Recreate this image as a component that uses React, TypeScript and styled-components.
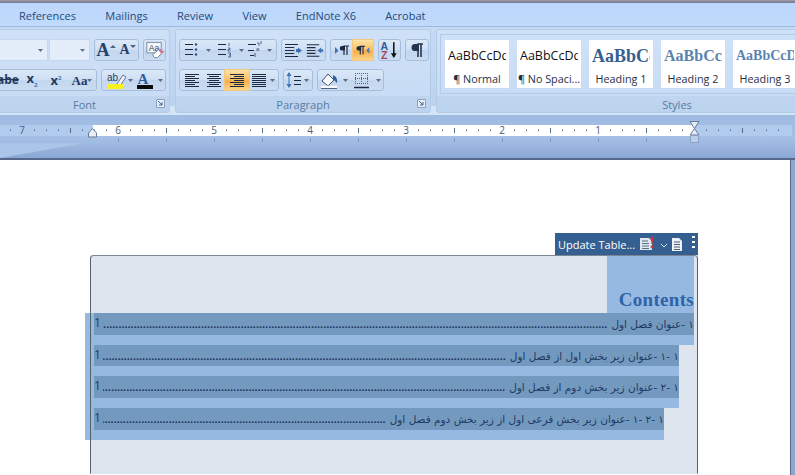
import React from 'react';
import styled, { createGlobalStyle, css } from 'styled-components';

const Global = createGlobalStyle`
  html, body { margin: 0; padding: 0; background: #fff; }
  body { font-family: "Open Sans", "Noto Sans", sans-serif; }
`;

const Page = styled.div`
  width: 795px; height: 475px; overflow: hidden;
  display: flex; flex-direction: column; background: #fff;
`;
const TitleEdge = styled.div`
  height: 3px; background: linear-gradient(#a89aa6, #6b7a98);
`;
const TabBar = styled.div`
  height: 24px; box-sizing: border-box; padding-left: 19px; display: flex; align-items: center; gap: 29.4px;
  background: linear-gradient(#bcd7fb, #c0dafc);
  border-bottom: 1px solid #9db8da;
`;
const Tab = styled.span`
  font-size: 11px; color: #254a78; white-space: nowrap; padding-top: 1px;
`;
const Ribbon = styled.div`
  height: 88px; display: flex; gap: 5px;
  padding: 2px 0 2px;
  box-sizing: border-box;
  background: linear-gradient(#c6dbf5, #bcd3ee 90%, #d5e5f8 90%);
`;
const Group = styled.section<{ $w: number; $open?: boolean }>`
  width: ${p => p.$w}px; flex: none; display: flex; flex-direction: column; overflow: hidden;
  box-sizing: border-box;
  border: 1px solid #b2cbe8;
  border-radius: 3px;
  ${p => p.$open && css`border-left: 0; border-top-left-radius: 0; border-bottom-left-radius: 0;`}
  background: linear-gradient(#cfe1f7, #c8dcf5 81%, #bfd5ef 81%, #bcd3ee);
`;
const GroupBody = styled.div<{ $end?: boolean }>`
  flex: 1; min-height: 0; display: flex; flex-direction: column; gap: 8px;
  padding: 9px 3px 0 3px;
  ${p => p.$end && css`align-items: flex-end;`}
`;
const GroupLabel = styled.div<{ $shift?: number; $bottom?: boolean }>`
  height: 16px; position: relative; display: flex; align-items: center; justify-content: center;
  font-size: 11px; color: #5a7ba5; flex: none; padding-left: ${p => p.$shift ?? 0}px; box-sizing: border-box;
  ${p => p.$bottom && css`margin-top: auto;`}
`;
const Launcher = styled.svg`
  position: absolute; right: 3px; top: 2px; width: 11px; height: 11px;
`;
const ToolRow = styled.div`
  display: flex; gap: 4px; height: 22px; flex: none;
`;
const ComboPair = styled.div`
  display: flex; gap: 1px;
`;
const Cluster = styled.div`
  display: flex; height: 22px; box-sizing: border-box; flex: none;
  border: 1px solid #a7bedb; border-radius: 3px;
  background: linear-gradient(#dbe8f8, #cfdff4 50%, #c2d6ef 50%, #cbdcf2);
`;
const ToolBtn = styled.div<{ $w: number; $on?: boolean }>`
  width: ${p => p.$w}px; height: 20px; flex: none; display: flex; align-items: center; justify-content: center;
  ${p => p.$on && css`
    background: linear-gradient(#fde2a8, #f9bf62 50%, #f7ab45 55%, #fcd68d);
    box-shadow: 0 0 0 1px #f5c77e;
  `}
`;
const Combo = styled.div<{ $w: number }>`
  width: ${p => p.$w}px; height: 22px; flex: none; box-sizing: border-box;
  background: #e4eefb; border: 1px solid #c6d8ef;
  display: flex; align-items: center; justify-content: flex-end; padding-right: 4px;
`;
const FontFace = styled.span<{ $size: number }>`
  font-family: "Liberation Serif", serif; font-weight: bold; color: #24406a; line-height: 1;
  font-size: ${p => p.$size}px;
`;
const Glyph = styled.span<{ $size: number; $serif?: boolean; $bold?: boolean; $strike?: boolean }>`
  font-family: ${p => p.$serif ? '"Liberation Serif", serif' : '"Open Sans", sans-serif'};
  font-size: ${p => p.$size}px; line-height: 1; color: #243a5e;
  font-weight: ${p => p.$bold ? 'bold' : 'normal'};
  ${p => p.$strike && css`text-decoration: line-through;`}
  sub, sup { font-size: 6px; color: #3d73b7; }
`;
const Gallery = styled.div`
  margin: 4px 0 0 3px; height: 60px; flex: none; box-sizing: border-box;
  border: 1px solid #b2cbe8; border-right: 0;
  display: flex; gap: 8px; padding: 5px 0 0 4px;
`;
const StyleCard = styled.div`
  width: 64px; height: 48px; flex: none; background: #fff; overflow: hidden;
  display: flex; flex-direction: column; align-items: center; justify-content: space-between;
  padding: 5px 0 2px; box-sizing: border-box;
`;
const Sample = styled.div<{ $kind: 'body' | 'h1' | 'h2' | 'h3' }>`
  width: 58px; white-space: nowrap; overflow: hidden; height: 22px; line-height: 22px;
  ${p => p.$kind === 'body' && css`font-size: 12.500px; color: #111; font-family: "Open Sans", sans-serif;`}
  ${p => p.$kind === 'h1' && css`font: bold 18px/22px "Liberation Serif", serif; color: #365f91;`}
  ${p => p.$kind === 'h2' && css`font: bold 16px/22px "Liberation Serif", serif; color: #5a84b0;`}
  ${p => p.$kind === 'h3' && css`font: bold 14px/22px "Liberation Serif", serif; color: #5a84b0;`}
`;
const CardName = styled.div`
  font-size: 10.800px; line-height: 15px; color: #1e2f48; white-space: nowrap;
`;
const RulerZone = styled.div`
  height: 43px; flex: none; position: relative; overflow: hidden;
  background: linear-gradient(#9ebbe2, #a5c0e6 50%, #9db9e0 70%, #8aa6d3);
  padding-top: 10px; box-sizing: border-box;
  &::before {
    content: ''; position: absolute; left: 0; top: 28px; width: 84px; height: 15px;
    background: #abc5e9; clip-path: polygon(0 0, 100% 0, 0 100%);
  }
`;
const RulerBand = styled.div`
  height: 11px; width: 792px; display: flex;
`;
const RulerMargin = styled.div<{ $w: number }>`
  width: ${p => p.$w}px; flex: none; background: #b1cbee;
`;
const RulerWhite = styled.div`
  flex: 1; background: #fff;
`;
const RulerArt = styled.svg`
  position: absolute; left: 0; top: 0; width: 795px; height: 43px;
`;
const DocArea = styled.div`
  flex: 1; min-height: 0; display: flex; background: #fff;
  border-top: 2px solid #55688c;
`;
const Sheet = styled.div`
  flex: 1; min-width: 0; padding: 73px 92px 0 90px; box-sizing: border-box; display: flex; flex-direction: column;
  background: #fff;
`;
const SideEdge = styled.div`
  width: 4px; flex: none; background: #8ba6cf; border-left: 1px solid #5b6c8c;
`;
const TitleTabRow = styled.div`
  display: flex; justify-content: flex-end; flex: none;
`;
const TitleTab = styled.div`
  width: 143px; height: 22px; box-sizing: border-box; background: #365f91; color: #fff;
  display: flex; align-items: center; padding-left: 3px; position: relative;
`;
const TabText = styled.span`
  font-size: 11px; color: #fff; white-space: nowrap; width: 81px; flex: none;
`;
const TabChevron = styled.svg`
  margin: 4px 2px 0 5px; flex: none;
`;
const Grip = styled.svg`
  position: absolute; right: 3px; top: 2px; width: 3px; height: 13px;
`;
const ControlBox = styled.div`
  position: relative; height: 219px; flex: none; background: #dfe5ee; display: flex; flex-direction: column;
  &::after {
    content: ''; position: absolute; inset: 0; border: 1px solid #56606f; border-top-color: #7c8594;
    border-radius: 4px 4px 0 0; border-bottom-color: transparent; pointer-events: none;
  }
`;
const HeadingBand = styled.div`
  height: 57px; margin-top: 1px; flex: none; display: flex; justify-content: flex-end; padding-right: 4px;
`;
const HeadingSel = styled.div`
  width: 87px; background: #95b9e1; display: flex; align-items: flex-end; justify-content: flex-end; padding-bottom: 3px;
  box-sizing: border-box;
  font: bold 19px/20px "Liberation Serif", serif; letter-spacing: .3px; color: #2f62a6; white-space: nowrap;
`;
const TocRow = styled.div<{ $h: number; $end: number }>`
  height: ${p => p.$h}px; flex: none; box-sizing: border-box;
  margin-left: -5px; margin-right: ${p => p.$end}px;
  padding: 0 0 10px 9px; background: #95b9e1; display: flex;
`;
const TocInner = styled.div`
  flex: 1; min-width: 0; background: #7499bf; display: flex; align-items: center; direction: rtl;
  color: #1d3a63;
`;
const TocTitle = styled.span`
  flex: none; font-family: "DejaVu Sans", sans-serif; font-size: 10.500px; white-space: nowrap; line-height: 20px;
`;
const Leader = styled.span`
  flex: 1; min-width: 0; overflow: hidden; white-space: nowrap; direction: ltr;
  font: bold 11px/14px "Liberation Sans", sans-serif; margin: 0 4px 0 2px;
  display: flex; justify-content: flex-end;
`;
const TocPage = styled.span`
  flex: none; font: 12px/14px "Open Sans", sans-serif; direction: ltr; margin-bottom: 2px;
`;

const Chev = ({ x = 0, y = 0 }: { x?: number; y?: number }) => (
  <path d={`M${x} ${y}h5l-2.5 3z`} fill="#5d6f88" />
);
const Small = ({ children, w = 20, h = 20 }: { children: React.ReactNode; w?: number; h?: number }) => (
  <svg width={w} height={h} viewBox={`0 0 ${w} ${h}`} fill="none">{children}</svg>
);
const Lines = ({ rows }: { rows: [number, number, number][] }) => (
  <>{rows.map((r, i) => <path key={i} d={`M${r[0]} ${r[2] + .5}H${r[1]}`} stroke="#1c2a3f" />)}</>
);
const Align = ({ kind }: { kind: 'l' | 'c' | 'r' | 'j' }) => {
  const long = [3, 17], short = kind === 'l' ? [3, 13] : kind === 'r' ? [7, 17] : kind === 'c' ? [5, 15] : [3, 17];
  const rows = [4, 6, 8, 10, 12, 14, 16].map((y, i) => {
    const s = i % 2 ? short : long;
    return [s[0], s[1], y] as [number, number, number];
  });
  return <Small><Lines rows={rows} /></Small>;
};
const Bullets = () => (
  <Small w={32}>
    <Lines rows={[[4, 12, 4], [4, 12, 9], [4, 12, 14]]} />
    <circle cx="15" cy="4.5" r="1.2" fill="#33517e" /><circle cx="15" cy="9.5" r="1.2" fill="#33517e" /><circle cx="15" cy="14.5" r="1.2" fill="#33517e" />
    <Chev x={25} y={9} />
  </Small>
);
const Numbered = () => (
  <Small w={32}>
    <Lines rows={[[4, 12, 4], [4, 12, 9], [4, 12, 14]]} />
    <path d="M15 3v3M14 8h2v1.5h-2V11h2.5M14 13h2.5v4H14M15 15h1" stroke="#33517e" strokeWidth=".8" />
    <Chev x={25} y={9} />
  </Small>
);
const Multi = () => (
  <Small w={30}>
    <Lines rows={[[2, 10, 4], [2, 8, 10], [4, 8, 15]]} />
    <path d="M11 3h2v3" stroke="#33517e" strokeWidth=".8" /><text x="10" y="11" fontSize="6" fill="#33517e" fontFamily="Liberation Sans">a</text>
    <path d="M15 1v3M9 13v4" stroke="#33517e" strokeWidth=".9" />
    <Chev x={21} y={9} />
  </Small>
);
const Indent = ({ back }: { back?: boolean }) => (
  <Small w={22}>
    <path d="M3 4.500h13M3 7.500h9M3 10.500h9M3 13.500h9M3 16.500h13" stroke="#1c2a3f" strokeWidth="1.2" />
    <path d="M12.500 6.500v8" stroke="#9aa6b8" strokeDasharray="1 1" />
    <path d={back ? 'M14 10.500l4-3v1.600h2v2.800h-2v1.600z' : 'M20 10.500l-4-3v1.600h-2v2.800h2v1.600z'} fill="#3e71b3" />
  </Small>
);
const Ltr = () => (
  <Small w={22}>
    <path d="M4 7v7l3.500-3.500z" fill="#3d73b7" />
    <path d="M13 15V6h5M16 6v9" stroke="#1c2a3f" strokeWidth="1.2" />
    <path d="M11 6h3v4.500h-3a2.250 2.250 0 0 1 0-4.500z" fill="#1c2a3f" />
  </Small>
);
const Rtl = () => (
  <Small w={22}>
    <path d="M8 15V6h5M11 6v9" stroke="#1c2a3f" strokeWidth="1.2" />
    <path d="M6 6h3v4.500H6a2.250 2.250 0 0 1 0-4.500z" fill="#1c2a3f" />
    <path d="M18 7v7l-3.500-3.500z" fill="#4f7cb5" />
  </Small>
);
const Sort = () => (
  <Small w={22}>
    <text x="1.500" y="9.500" fontSize="11" fontWeight="bold" fontFamily="Liberation Sans" fill="#2f5d9c">A</text>
    <text x="2" y="19" fontSize="11" fontWeight="bold" fontFamily="Liberation Sans" fill="#9a4a5c">Z</text>
    <path d="M15.500 2v15" stroke="#111" strokeWidth="1.6" /><path d="M12.500 13.500h6l-3 5z" fill="#111" />
  </Small>
);
const Pilcrow = () => (
  <Small w={22}>
    <path d="M12 17V4h5M15 4v13" stroke="#24344d" strokeWidth="1.6" />
    <path d="M9 4h4v7H9a3.500 3.500 0 0 1 0-7z" fill="#24344d" />
  </Small>
);
const LineSpacing = () => (
  <Small w={28}>
    <path d="M5 3v14" stroke="#4a80c4" strokeWidth="1.2" />
    <path d="M2.500 6l2.500-4 2.500 4zM2.500 14l2.500 4 2.500-4z" fill="#3d73b7" />
    <Lines rows={[[10, 17, 6], [10, 17, 10], [10, 17, 14]]} />
    <Chev x={20} y={9} />
  </Small>
);
const Shading = () => (
  <Small w={33}>
    <path d="M4 11l6-7 6 6-6 6z" fill="#f4f6fa" stroke="#40536f" />
    <path d="M15 5l3 2c1 2 1.500 4 1 6-1.500-1-2.500-3-4-4z" fill="#2e5fa3" />
    <path d="M3 17h16" stroke="#f7f9fc" strokeWidth="2.500" /><path d="M3 18.500h16" stroke="#50617b" />
    <Chev x={25} y={9} />
  </Small>
);
const Borders = () => (
  <Small w={32}>
    <path d="M4 3.500h13M4 8.500h13M4 13.500h13M4.500 3v11M10.500 3v11M16.500 3v11" stroke="#55667f" strokeDasharray="1 1" />
    <path d="M3 17.500h15" stroke="#1c2a3f" strokeWidth="1.4" />
    <Chev x={25} y={9} />
  </Small>
);
const Grow = () => (
  <ToolBtn $w={22}>
    <FontFace $size={18}>A</FontFace>
    <svg width="6" height="12" viewBox="0 0 6 12"><path d="M0 4l3-3 3 3z" fill="#4e6484" /></svg>
  </ToolBtn>
);
const Shrink = () => (
  <ToolBtn $w={21}>
    <FontFace $size={14}>A</FontFace>
    <svg width="6" height="12" viewBox="0 0 6 12"><path d="M0 1h6L3 4z" fill="#4e6484" /></svg>
  </ToolBtn>
);
const ClearFmt = () => (
  <Small w={22}>
    <rect x="3" y="2" width="15" height="11" fill="#f4f7fc" stroke="#7689a6" />
    <text x="5" y="11" fontSize="9" fontFamily="Liberation Sans" fill="#30425f">Aa</text>
    <path d="M9 15l7-6 4 3-6 6h-3z" fill="#fff" stroke="#6f7f96" />
    <path d="M15 10l3-1 3 3-3 2z" fill="#cf7a92" />
  </Small>
);
const Highlighter = () => (
  <Small w={30}>
    <text x="3" y="11" fontSize="10" fontFamily="Liberation Sans" fill="#283c5c">ab</text>
    <path d="M13 14l6-9 3 2-6 9z" fill="#eef2f8" stroke="#44597a" strokeWidth=".8" />
    <rect x="3" y="14" width="16" height="5" fill="#f7f21e" />
    <Chev x={24} y={9} />
  </Small>
);
const FontColor = () => (
  <Small w={30}>
    <text x="2.500" y="14" fontSize="15" fontFamily="Liberation Serif" fontWeight="bold" fill="#2f5d9c">A</text>
    <rect x="2" y="15" width="16" height="4" fill="#0b0b0b" />
    <Chev x={23} y={9} />
  </Small>
);
const DocWarn = () => (
  <svg width="16" height="16" viewBox="0 0 16 16">
    <path d="M1 2h9l3 3v9H1z" fill="#dfe7f1" />
    <path d="M3 5h6M3 7.500h7M3 10h7M3 12.500h7" stroke="#5d6f88" />
    <path d="M11.500 1h3l-1 7h-1z" fill="#d8333a" /><circle cx="13" cy="11" r="1.4" fill="#d8333a" />
  </svg>
);
const DocGrid = () => (
  <svg width="12" height="15" viewBox="0 0 12 15">
    <path d="M1 1h7l3 3v10H1z" fill="#eef2f7" />
    <path d="M3 5h6M3 7.500h6M3 10h6M3 12.500h6" stroke="#4b5d78" />
  </svg>
);

const inchNumbers: [string, number][] = [['7', 22], ['6', 118], ['5', 214], ['4', 310], ['3', 406], ['2', 502], ['1', 598]];
const Ruler = () => {
  const dots: React.ReactNode[] = [];
  for (let x = 10; x < 780; x += 12) {
    const rel = ((x - 22) % 96 + 96) % 96;
    if (x === 694 || rel === 0) continue;
    if (rel === 48) dots.push(<path key={x} d={`M${x + .5} 13v5`} stroke="#5d6d85" />);
    else dots.push(<path key={x} d={`M${x + .5} 14.500v1.500`} stroke="#5d6d85" />);
  }
  const under: React.ReactNode[] = [];
  for (let x = 118; x <= 694; x += 48) under.push(<path key={x} d={`M${x + .5} 23v4`} stroke="#7f97ba" />);
  return (
    <RulerArt viewBox="0 0 795 43">
      {dots}{under}
      {inchNumbers.map(([t, x]) => (
        <text key={t} x={x} y="19" textAnchor="middle" fontSize="10" fontFamily="Open Sans" fill="#4b5d78">{t}</text>
      ))}
      <path d="M88.500 18l4-4.500 4 4.500v4h-8z" fill="#e9f0f9" stroke="#667a99" />
      <path d="M690 6.500h9l-4.500 7 4.500 6.500h-9l4.500-6.500z" fill="#e4ecf7" stroke="#667a99" />
      <path d="M690.500 20.500h8v7h-8z" fill="#bccfe9" stroke="#8ba0bf" />
    </RulerArt>
  );
};

const styleCards: { k: 'body' | 'h1' | 'h2' | 'h3'; s: string; n: string }[] = [
  { k: 'body', s: 'AaBbCcDdEe', n: '¶ Normal' },
  { k: 'body', s: 'AaBbCcDdEe', n: '¶ No Spaci...' },
  { k: 'h1', s: 'AaBbCcDd', n: 'Heading 1' },
  { k: 'h2', s: 'AaBbCc', n: 'Heading 2' },
  { k: 'h3', s: 'AaBbCcDd', n: 'Heading 3' },
];
const toc = [
  { t: '١ -عنوان فصل اول', h: 32, end: 4 },
  { t: '١ -١ -عنوان زیر بخش اول از فصل اول', h: 31, end: 19 },
  { t: '١ -٢ -عنوان زیر بخش دوم از فصل اول', h: 32, end: 19 },
  { t: '١ -٢ -١ -عنوان زیر بخش فرعی اول از زیر بخش دوم فصل اول', h: 32, end: 34 },
];
const launcher = (
  <Launcher viewBox="0 0 11 11">
    <path d="M1.500 1.500h8v8h-8z" fill="#e4edf8" stroke="#8aa0bd" />
    <path d="M3 3l4 4M7 4v3H4" stroke="#4f6583" fill="none" />
  </Launcher>
);
const comboArrow = <svg width="5" height="3"><path d="M0 0h5L2.500 3z" fill="#5d6f88" /></svg>;

export default function App() {
  return (
    <Page>
      <Global />
      <TitleEdge />
      <TabBar>
        {['References', 'Mailings', 'Review', 'View', 'EndNote X6', 'Acrobat'].map(t => <Tab key={t}>{t}</Tab>)}
      </TabBar>
      <Ribbon>
        <Group $w={170} $open>
          <GroupBody $end>
            <ToolRow>
              <ComboPair>
                <Combo $w={49}>{comboArrow}</Combo>
                <Combo $w={41}>{comboArrow}</Combo>
              </ComboPair>
              <Cluster><Grow /><Shrink /></Cluster>
              <Cluster><ToolBtn $w={21}><ClearFmt /></ToolBtn></Cluster>
            </ToolRow>
            <ToolRow>
              <Cluster>
                <ToolBtn $w={24}><Glyph $size={12} $bold $strike>abe</Glyph></ToolBtn>
                <ToolBtn $w={24}><Glyph $size={13} $bold>x<sub>2</sub></Glyph></ToolBtn>
                <ToolBtn $w={24}><Glyph $size={13} $bold>x<sup>2</sup></Glyph></ToolBtn>
                <ToolBtn $w={28}><Glyph $size={13} $serif $bold>Aa</Glyph>{comboArrow}</ToolBtn>
              </Cluster>
              <Cluster>
                <ToolBtn $w={33}><Highlighter /></ToolBtn>
                <ToolBtn $w={30}><FontColor /></ToolBtn>
              </Cluster>
            </ToolRow>
          </GroupBody>
          <GroupLabel>Font{launcher}</GroupLabel>
        </Group>
        <Group $w={256}>
          <GroupBody>
            <ToolRow>
              <Cluster>
                <ToolBtn $w={34}><Bullets /></ToolBtn>
                <ToolBtn $w={32}><Numbered /></ToolBtn>
                <ToolBtn $w={30}><Multi /></ToolBtn>
              </Cluster>
              <Cluster><ToolBtn $w={22}><Indent /></ToolBtn><ToolBtn $w={21}><Indent back /></ToolBtn></Cluster>
              <Cluster><ToolBtn $w={22}><Ltr /></ToolBtn><ToolBtn $w={20} $on><Rtl /></ToolBtn></Cluster>
              <Cluster><ToolBtn $w={21}><Sort /></ToolBtn></Cluster>
              <Cluster><ToolBtn $w={22}><Pilcrow /></ToolBtn></Cluster>
            </ToolRow>
            <ToolRow>
              <Cluster>
                <ToolBtn $w={23}><Align kind="l" /></ToolBtn>
                <ToolBtn $w={22}><Align kind="c" /></ToolBtn>
                <ToolBtn $w={24} $on><Align kind="r" /></ToolBtn>
                <ToolBtn $w={29}><Small w={29}><Lines rows={[4, 6, 8, 10, 12, 14, 16].map(y => [3, 17, y] as [number, number, number])} /><Chev x={21} y={9} /></Small></ToolBtn>
              </Cluster>
              <Cluster><ToolBtn $w={28}><LineSpacing /></ToolBtn></Cluster>
              <Cluster><ToolBtn $w={33}><Shading /></ToolBtn><ToolBtn $w={32}><Borders /></ToolBtn></Cluster>
            </ToolRow>
          </GroupBody>
          <GroupLabel>Paragraph{launcher}</GroupLabel>
        </Group>
        <Group $w={364}>
          <Gallery>
            {styleCards.map(c => (
              <StyleCard key={c.n}>
                <Sample $kind={c.k}>{c.s}</Sample>
                <CardName>{c.n}</CardName>
              </StyleCard>
            ))}
          </Gallery>
          <GroupLabel $shift={118} $bottom>Styles</GroupLabel>
        </Group>
      </Ribbon>
      <RulerZone>
        <RulerBand>
          <RulerMargin $w={93} />
          <RulerWhite />
          <RulerMargin $w={97} />
        </RulerBand>
        <Ruler />
      </RulerZone>
      <DocArea>
        <Sheet>
          <TitleTabRow>
            <TitleTab>
              <TabText>Update Table...</TabText>
              <DocWarn />
              <TabChevron width="9" height="6" viewBox="0 0 9 6"><path d="M1 1l3 3 3-3" stroke="#dfe7f1" fill="none" /></TabChevron>
              <DocGrid />
              <Grip viewBox="0 0 3 13"><path d="M0 1h3v2H0zM0 6h3v2H0zM0 11h3v2H0z" fill="#fff" /></Grip>
            </TitleTab>
          </TitleTabRow>
          <ControlBox>
            <HeadingBand><HeadingSel>Contents</HeadingSel></HeadingBand>
            {toc.map(r => (
              <TocRow key={r.t} $h={r.h} $end={r.end}>
                <TocInner>
                  <TocTitle>{r.t}</TocTitle>
                  <Leader>{'.'.repeat(220)}</Leader>
                  <TocPage>1</TocPage>
                </TocInner>
              </TocRow>
            ))}
          </ControlBox>
        </Sheet>
        <SideEdge />
      </DocArea>
    </Page>
  );
}
